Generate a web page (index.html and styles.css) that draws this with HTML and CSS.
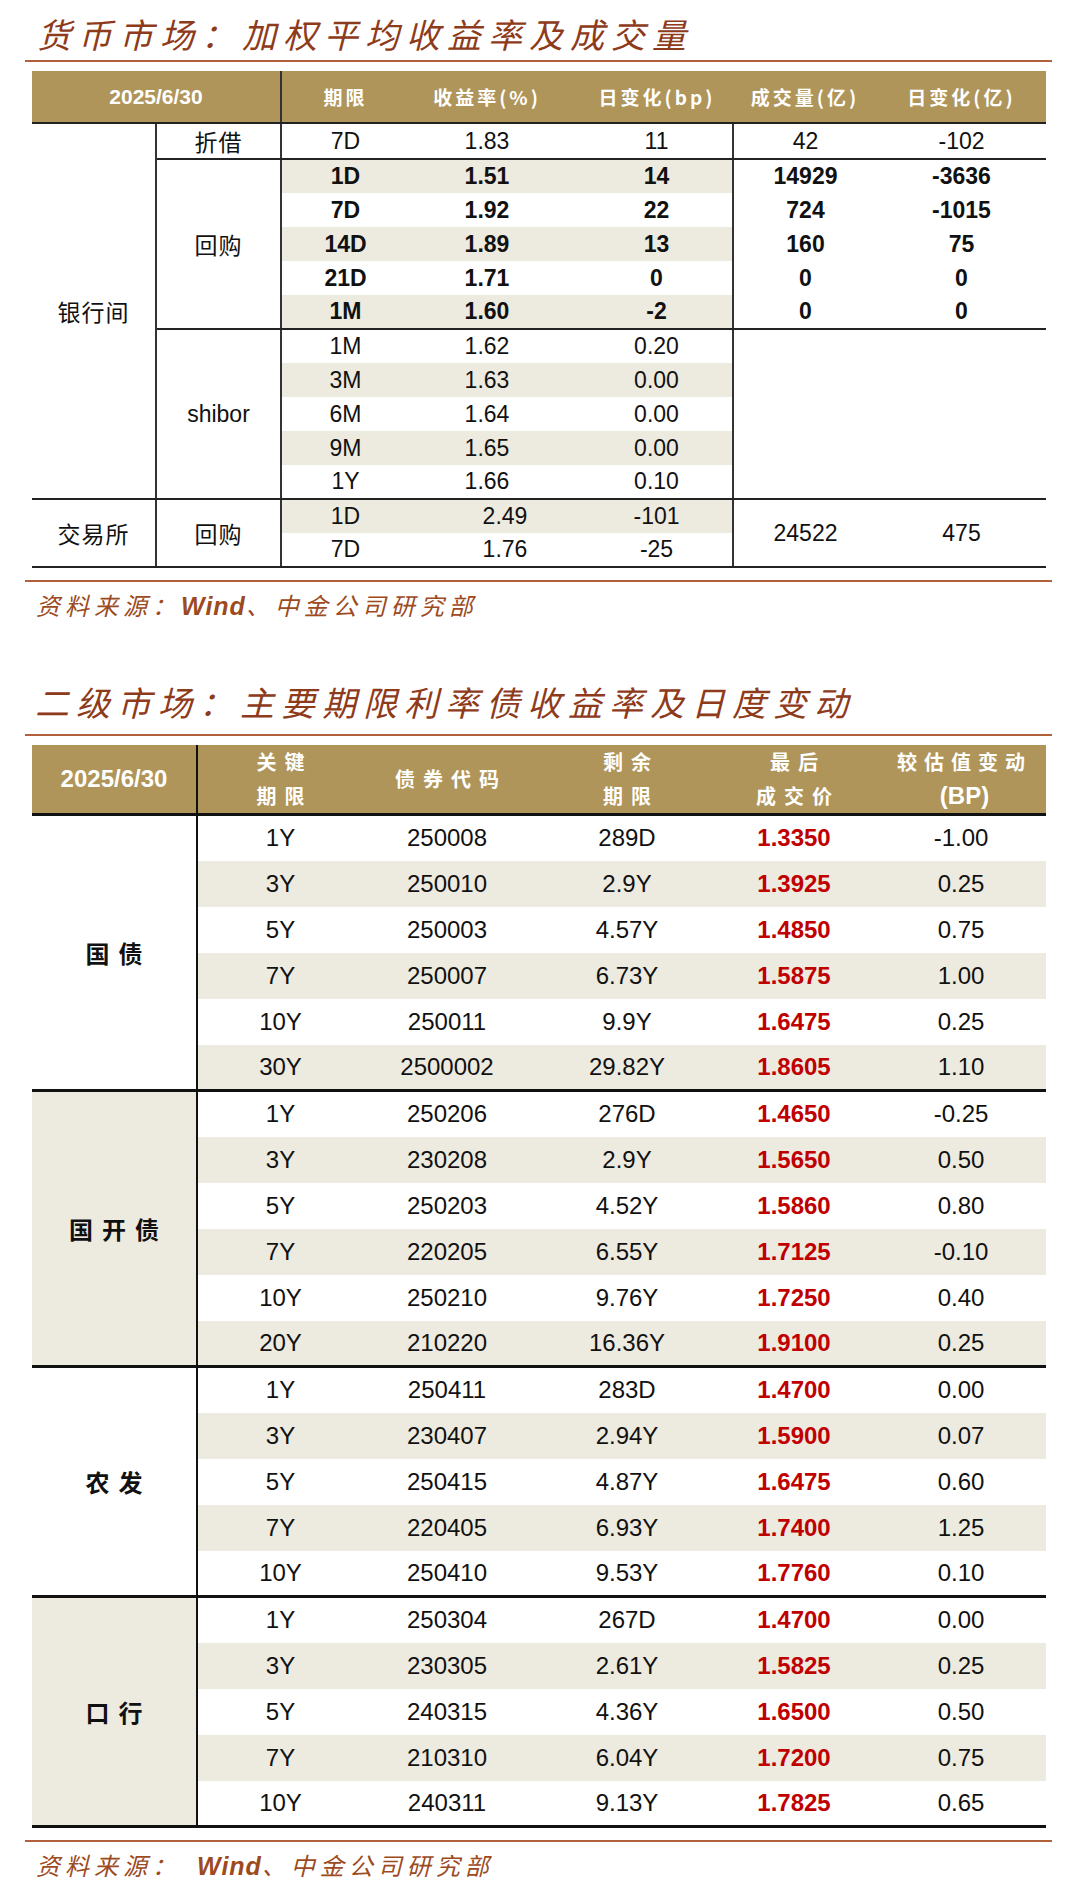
FILE: index.html
```html
<!DOCTYPE html>
<html lang="zh-CN">
<head>
<meta charset="utf-8">
<title>货币市场与二级市场</title>
<link rel="stylesheet" href="styles.css">
</head>
<body>
<div class="page">
  <h1 class="title t1">货币市场：加权平均收益率及成交量</h1>
  <table class="mm">
    <colgroup>
      <col class="w124"><col class="w125"><col class="w128"><col class="w156"><col class="w168"><col class="w144"><col class="w169">
    </colgroup>
    <tr class="hd">
      <th colspan="2" class="date vr">2025/6/30</th>
      <th class="cn">期限</th>
      <th class="cn">收益率(%)</th>
      <th class="cn c5">日变化(bp)</th>
      <th class="cn">成交量(亿)</th>
      <th class="cn">日变化(亿)</th>
    </tr>
    <tr>
      <td rowspan="11" class="lab vr bb">银行间</td>
      <td class="lab vr bb">折借</td>
      <td class="bb">7D</td><td class="bb">1.83</td><td class="c5 vr bb">11</td><td class="bb">42</td><td class="bb">-102</td>
    </tr>
    <tr class="b">
      <td rowspan="5" class="lab vr bb">回购</td>
      <td class="s">1D</td><td class="s">1.51</td><td class="s c5 vr">14</td><td>14929</td><td>-3636</td>
    </tr>
    <tr class="b"><td>7D</td><td>1.92</td><td class="c5 vr">22</td><td>724</td><td>-1015</td></tr>
    <tr class="b"><td class="s">14D</td><td class="s">1.89</td><td class="s c5 vr">13</td><td>160</td><td>75</td></tr>
    <tr class="b"><td>21D</td><td>1.71</td><td class="c5 vr">0</td><td>0</td><td>0</td></tr>
    <tr class="b"><td class="s bb">1M</td><td class="s bb">1.60</td><td class="s c5 vr bb">-2</td><td class="bb">0</td><td class="bb">0</td></tr>
    <tr>
      <td rowspan="5" class="vr bb">shibor</td>
      <td>1M</td><td>1.62</td><td class="c5 vr">0.20</td>
      <td rowspan="5" colspan="2" class="bb"></td>
    </tr>
    <tr><td class="s">3M</td><td class="s">1.63</td><td class="s c5 vr">0.00</td></tr>
    <tr><td>6M</td><td>1.64</td><td class="c5 vr">0.00</td></tr>
    <tr><td class="s">9M</td><td class="s">1.65</td><td class="s c5 vr">0.00</td></tr>
    <tr><td class="bb">1Y</td><td class="bb">1.66</td><td class="c5 vr bb">0.10</td></tr>
    <tr>
      <td rowspan="2" class="lab vr bb">交易所</td>
      <td rowspan="2" class="lab vr bb">回购</td>
      <td class="s">1D</td><td class="s ex">2.49</td><td class="s c5 vr">-101</td>
      <td rowspan="2" class="bb">24522</td><td rowspan="2" class="bb">475</td>
    </tr>
    <tr><td class="bb">7D</td><td class="bb ex">1.76</td><td class="c5 vr bb">-25</td></tr>
  </table>
  <p class="src">资料来源：<span class="w">Wind</span>、中金公司研究部</p>

  <h1 class="title t2">二级市场：主要期限利率债收益率及日度变动</h1>
  <table class="bd">
    <colgroup>
      <col class="w165"><col class="w166"><col class="w168"><col class="w192"><col class="w142"><col class="w181">
    </colgroup>
    <tr class="hd">
      <th class="date vr">2025/6/30</th>
      <th class="cn">关键<br>期限</th>
      <th class="cn">债券代码</th>
      <th class="cn">剩余<br>期限</th>
      <th class="cn">最后<br>成交价</th>
      <th class="cn c6">较估值变动<br><span class="en">(BP)</span></th>
    </tr>

    <tr><td rowspan="6" class="grp vr gb">国债</td><td>1Y</td><td>250008</td><td>289D</td><td class="red">1.3350</td><td class="c6">-1.00</td></tr>
    <tr class="s"><td>3Y</td><td>250010</td><td>2.9Y</td><td class="red">1.3925</td><td class="c6">0.25</td></tr>
    <tr><td>5Y</td><td>250003</td><td>4.57Y</td><td class="red">1.4850</td><td class="c6">0.75</td></tr>
    <tr class="s"><td>7Y</td><td>250007</td><td>6.73Y</td><td class="red">1.5875</td><td class="c6">1.00</td></tr>
    <tr><td>10Y</td><td>250011</td><td>9.9Y</td><td class="red">1.6475</td><td class="c6">0.25</td></tr>
    <tr class="s gb"><td>30Y</td><td>2500002</td><td>29.82Y</td><td class="red">1.8605</td><td class="c6">1.10</td></tr>

    <tr><td rowspan="6" class="grp gs vr gb">国开债</td><td>1Y</td><td>250206</td><td>276D</td><td class="red">1.4650</td><td class="c6">-0.25</td></tr>
    <tr class="s"><td>3Y</td><td>230208</td><td>2.9Y</td><td class="red">1.5650</td><td class="c6">0.50</td></tr>
    <tr><td>5Y</td><td>250203</td><td>4.52Y</td><td class="red">1.5860</td><td class="c6">0.80</td></tr>
    <tr class="s"><td>7Y</td><td>220205</td><td>6.55Y</td><td class="red">1.7125</td><td class="c6">-0.10</td></tr>
    <tr><td>10Y</td><td>250210</td><td>9.76Y</td><td class="red">1.7250</td><td class="c6">0.40</td></tr>
    <tr class="s gb"><td>20Y</td><td>210220</td><td>16.36Y</td><td class="red">1.9100</td><td class="c6">0.25</td></tr>

    <tr><td rowspan="5" class="grp vr gb">农发</td><td>1Y</td><td>250411</td><td>283D</td><td class="red">1.4700</td><td class="c6">0.00</td></tr>
    <tr class="s"><td>3Y</td><td>230407</td><td>2.94Y</td><td class="red">1.5900</td><td class="c6">0.07</td></tr>
    <tr><td>5Y</td><td>250415</td><td>4.87Y</td><td class="red">1.6475</td><td class="c6">0.60</td></tr>
    <tr class="s"><td>7Y</td><td>220405</td><td>6.93Y</td><td class="red">1.7400</td><td class="c6">1.25</td></tr>
    <tr class="gb"><td>10Y</td><td>250410</td><td>9.53Y</td><td class="red">1.7760</td><td class="c6">0.10</td></tr>

    <tr><td rowspan="5" class="grp gs vr gb">口行</td><td>1Y</td><td>250304</td><td>267D</td><td class="red">1.4700</td><td class="c6">0.00</td></tr>
    <tr class="s"><td>3Y</td><td>230305</td><td>2.61Y</td><td class="red">1.5825</td><td class="c6">0.25</td></tr>
    <tr><td>5Y</td><td>240315</td><td>4.36Y</td><td class="red">1.6500</td><td class="c6">0.50</td></tr>
    <tr class="s"><td>7Y</td><td>210310</td><td>6.04Y</td><td class="red">1.7200</td><td class="c6">0.75</td></tr>
    <tr class="gb"><td>10Y</td><td>240311</td><td>9.13Y</td><td class="red">1.7825</td><td class="c6">0.65</td></tr>
  </table>
  <p class="src">资料来源：<span class="w gap">Wind</span>、中金公司研究部</p>
</div>
</body>
</html>
```

FILE: styles.css
```css
html, body {
  margin: 0;
  padding: 0;
  background: #ffffff;
}

body {
  width: 1080px;
  font-family: "Liberation Sans", "Noto Sans CJK SC", sans-serif;
  color: #111111;
}

.page {
  padding: 0 28px 0 25px;
}

.title {
  margin: 0;
  padding: 8px 0 0 12px;
  height: 52px;
  line-height: 52px;
  font-family: "Noto Sans CJK SC", sans-serif;
  font-style: italic;
  font-weight: 400;
  font-size: 34px;
  letter-spacing: 7px;
  color: #8e3b1b;
  border-bottom: 2px solid #b0603a;
  white-space: nowrap;
}

.t2 {
  margin-top: 48px;
  padding-top: 0;
  height: 60px;
  line-height: 56px;
  padding-left: 10px;
}

table {
  margin-left: 7px;
  width: 1014px;
  table-layout: fixed;
  border-collapse: collapse;
  border-spacing: 0;
}

.mm { margin-top: 9px; }
.bd { margin-top: 9px; }

.w124 { width: 124px; }
.w125 { width: 125px; }
.w128 { width: 128px; }
.w156 { width: 156px; }
.w168 { width: 168px; }
.w144 { width: 144px; }
.w169 { width: 169px; }
.w165 { width: 165px; }
.w166 { width: 166px; }
.w192 { width: 192px; }
.w142 { width: 142px; }
.w181 { width: 181px; }

th, td {
  padding: 0;
  text-align: center;
  vertical-align: middle;
  white-space: nowrap;
}

th {
  background: #b0955a;
  color: #ffffff;
  font-weight: bold;
}

.date {
  font-family: "Liberation Sans", sans-serif;
  font-size: 21px;
}

.cn {
  font-family: "Noto Sans CJK SC", sans-serif;
  font-size: 19px;
  letter-spacing: 3px;
}

/* money market table */
.mm .hd { height: 52px; }
.mm .hd th { border-bottom: 2px solid #222222; }
.mm tr { height: 34px; }
.mm td { font-size: 23px; }
.mm .b td { font-weight: bold; }
.mm .b td.lab { font-weight: normal; }
.mm .vr { border-right: 2px solid #333333; }
.mm .bb { border-bottom: 2px solid #222222; }
.mm .c5 { padding-left: 16px; }
.mm .ex { padding-left: 36px; }
.mm td.s { background: #edeae0; }

.lab {
  font-family: "Noto Sans CJK SC", sans-serif;
  font-size: 20px;
  letter-spacing: 1px;
}

/* bond table */
.bd .hd { height: 68px; }
.bd .hd th { border-bottom: 3px solid #111111; line-height: 34px; }
.bd .hd .date { font-size: 24px; }
.bd .hd .cn { font-size: 20px; letter-spacing: 8px; padding-left: 8px; }
.bd .hd .c6 { letter-spacing: 7px; padding-left: 18px; }
.bd .en {
  font-family: "Liberation Sans", sans-serif;
  font-size: 24px;
  letter-spacing: 0;
}
.bd tr { height: 46px; }
.bd td { font-size: 24px; }
.bd tr.s td { background: #edeae0; }
.bd .vr { border-right: 2px solid #111111; }
.bd tr.gb td, .bd td.gb { border-bottom: 3px solid #111111; }
.bd .c6 { padding-left: 11px; }
.bd .red { color: #c00000; font-weight: bold; }

.grp {
  font-family: "Noto Sans CJK SC", sans-serif;
  font-size: 21px;
  font-weight: bold;
  letter-spacing: 9px;
  padding-left: 9px;
  background: #ffffff;
}

.grp.gs { background: #edeae0; }

.src {
  margin: 12px 0 0 0;
  padding-left: 11px;
  height: 44px;
  line-height: 46px;
  border-top: 2px solid #b0603a;
  font-family: "Noto Sans CJK SC", sans-serif;
  font-style: italic;
  font-size: 24px;
  letter-spacing: 5px;
  color: #9c4a1e;
  white-space: nowrap;
}

.w {
  font-family: "Liberation Sans", sans-serif;
  font-weight: bold;
  font-size: 25px;
  letter-spacing: 1px;
}

.gap { margin-left: 16px; }
```
